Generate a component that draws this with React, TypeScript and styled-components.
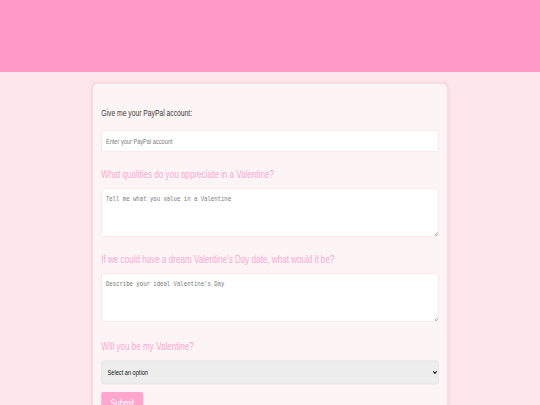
import React from "react";
import styled, { createGlobalStyle } from "styled-components";

/* The page is laid out at its natural 1280×720 size and shown in the
   540×405 frame, squeezed the way the reference screenshot is. */
const GlobalStyle = createGlobalStyle`
  html, body {
    margin: 0;
    padding: 0;
    overflow: hidden;
    background: #fde7eb;
  }
  * { box-sizing: border-box; }
`;

const Stage = styled.div`
  width: 1280px;
  height: 720px;
  transform: scale(0.421875, 0.5625);
  transform-origin: 0 0;
  overflow: hidden;
  background: #fde7eb;
  font-family: "Liberation Sans", Arial, sans-serif;
`;

const Header = styled.header`
  height: 128px;
  background: #ff99c8;
`;

const Card = styled.main`
  width: 840px;
  margin: 21px auto 0;
  padding: 43px 20px 20px;
  background: #fdf4f5;
  border-radius: 10px;
  box-shadow: 0 0 8px rgba(214, 140, 160, 0.28);
`;

const Form = styled.form`
  display: flex;
  flex-direction: column;
`;

const Group = styled.div<{ $space: number }>`
  display: flex;
  flex-direction: column;
  margin-bottom: ${(p) => p.$space}px;
`;

const Label = styled.label<{ $plain?: boolean }>`
  display: block;
  font-size: ${(p) => (p.$plain ? "16px" : "19.2px")};
  line-height: ${(p) => (p.$plain ? "18px" : "22px")};
  color: ${(p) => (p.$plain ? "#3a3a3a" : "#fca8d2")};
  margin-bottom: ${(p) => (p.$plain ? "22px" : "13px")};
`;

const fieldBase = `
  width: 100%;
  padding: 10px;
  border: 1px solid #f6d6de;
  border-radius: 5px;
  background: #ffffff;
  outline: none;
  &::placeholder { color: #7a7a7a; }
`;

const TextInput = styled.input`
  ${fieldBase}
  height: 38px;
  font-family: "Liberation Sans", Arial, sans-serif;
  font-size: 13.33px;
`;

const TextArea = styled.textarea`
  ${fieldBase}
  height: 86px;
  font-family: "DejaVu Sans Mono", monospace;
  font-size: 13.33px;
  resize: vertical;
`;

const Select = styled.select`
  width: 100%;
  height: 42px;
  padding: 10px;
  border: 1px solid #dcdcdc;
  border-radius: 5px;
  background: #ededed;
  color: #111;
  font-family: "Liberation Sans", Arial, sans-serif;
  font-size: 13.33px;
`;

const SubmitButton = styled.button`
  align-self: flex-start;
  width: 100px;
  padding: 10px 0;
  border: none;
  border-radius: 5px;
  background: #ffa6cf;
  color: #ffffff;
  font-family: "Liberation Sans", Arial, sans-serif;
  font-size: 18px;
`;

export default function App() {
  return (
    <>
      <GlobalStyle />
      <Stage>
        <Header />
        <Card>
          <Form onSubmit={(e) => e.preventDefault()}>
            <Group $space={30}>
              <Label $plain htmlFor="paypal">Give me your PayPal account:</Label>
              <TextInput id="paypal" type="text" placeholder="Enter your PayPal account" />
            </Group>
            <Group $space={30}>
              <Label htmlFor="qualities">What qualities do you appreciate in a Valentine?</Label>
              <TextArea id="qualities" placeholder="Tell me what you value in a Valentine" />
            </Group>
            <Group $space={34}>
              <Label htmlFor="date">If we could have a dream Valentine's Day date, what would it be?</Label>
              <TextArea id="date" placeholder="Describe your ideal Valentine's Day" />
            </Group>
            <Group $space={14}>
              <Label htmlFor="answer">Will you be my Valentine?</Label>
              <Select id="answer" defaultValue="">
                <option value="">Select an option</option>
                <option value="yes">Yes</option>
                <option value="no">No</option>
              </Select>
            </Group>
            <SubmitButton type="submit">Submit</SubmitButton>
          </Form>
        </Card>
      </Stage>
    </>
  );
}
